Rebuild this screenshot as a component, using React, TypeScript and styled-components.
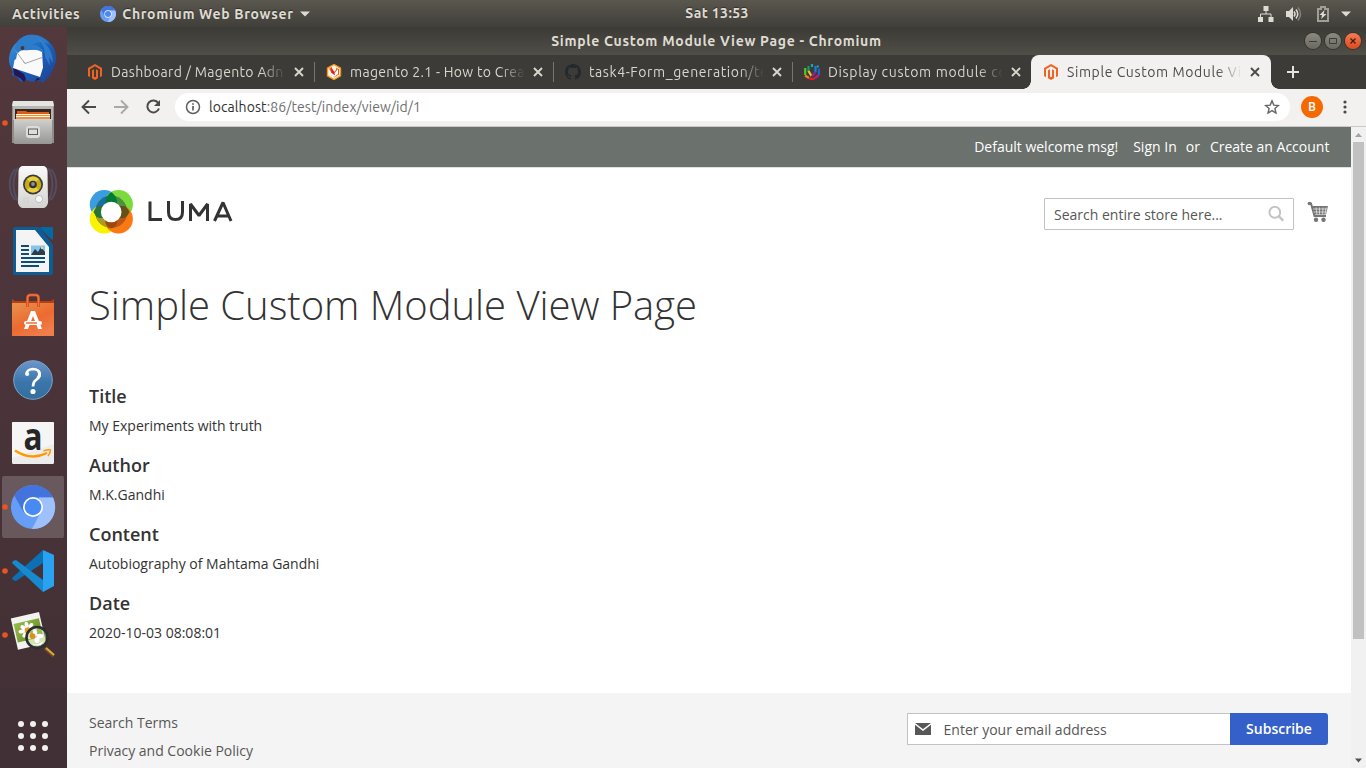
import React from "react";
import styled, { createGlobalStyle, css } from "styled-components";

const uiFont = `Ubuntu, "Noto Sans", "Open Sans", sans-serif`;
const pageFont = `"Open Sans", "Noto Sans", sans-serif`;

const GlobalStyle = createGlobalStyle`
  * { box-sizing: border-box; }
  body { margin: 0; overflow: hidden; background: #fff; }
  svg { display: block; flex: none; }
`;

const Desktop = styled.div`
  width: 1366px;
  height: 768px;
  display: flex;
  flex-direction: column;
  overflow: hidden;
  font-family: ${uiFont};
`;

const TopBar = styled.header`
  height: 27px;
  flex: none;
  display: grid;
  grid-template-columns: 1fr auto 1fr;
  align-items: center;
  padding: 0 15px 0 12px;
  background: linear-gradient(#5a574e, #403f3a);
  color: #dfdbd2;
  text-shadow: 0 -1px 1px rgba(0, 0, 0, 0.4);
`;

const TopGroup = styled.div<{ $end?: boolean }>`
  display: flex;
  align-items: center;
  justify-content: ${(p) => (p.$end ? "flex-end" : "flex-start")};
`;

const BoldLabel = styled.span<{ $spacing?: number }>`
  font-size: 14px;
  font-weight: 600;
  line-height: 20px;
  white-space: nowrap;
  letter-spacing: ${(p) => p.$spacing ?? 0.7}px;
`;

const Clock = styled(BoldLabel)`
  margin: -2px 0 0 71px;
`;

const AppMenu = styled.div`
  display: flex;
  align-items: center;
  margin-left: 20px;
  gap: 6px;
`;

const Workspace = styled.div`
  flex: 1;
  display: flex;
  min-height: 0;
`;

const Dock = styled.nav`
  width: 67px;
  flex: none;
  display: flex;
  flex-direction: column;
  justify-content: space-between;
  background: linear-gradient(#53383c, #4a343a 45%, #443136 80%, #403036);
`;

const DockItem = styled.div<{ $active?: boolean }>`
  height: 64px;
  display: flex;
  ${(p) =>
    p.$active &&
    css`
      background: rgba(255, 255, 255, 0.19);
      border-radius: 4px;
      background-clip: padding-box;
      border: solid transparent;
      border-width: 1px 3px 1px 2px;
      svg { margin: -1px 0 0 -2px; }
    `}
`;

const Browser = styled.main`
  flex: 1;
  min-width: 0;
  display: flex;
  flex-direction: column;
`;

const TitleBar = styled.div`
  height: 28px;
  flex: none;
  display: grid;
  grid-template-columns: 1fr auto 1fr;
  align-items: center;
  padding: 0 5px 0 0;
  background: linear-gradient(#3b3a35, #504e47);
  color: #dfdbd2;
`;

const WindowTitle = styled(BoldLabel)`
  grid-column: 2;
  margin-left: 5px;
`;

const WindowButtons = styled.div`
  grid-column: 3;
  justify-self: end;
  display: flex;
  gap: 4px;
`;

const WindowButton = styled.span<{ $close?: boolean }>`
  width: 16px;
  height: 16px;
  border-radius: 50%;
  background: ${(p) => (p.$close ? "linear-gradient(#f47d55, #e2481b)" : "linear-gradient(#8b8980, #6a6861)")};
  box-shadow: 0 0 0 1px #35342f;
`;

const TabStrip = styled.div`
  height: 34px;
  flex: none;
  display: flex;
  align-items: stretch;
  padding-left: 8px;
  background: #3c3b37;
`;

const Tab = styled.div<{ $active?: boolean; $divider?: boolean }>`
  position: relative;
  width: 239px;
  display: flex;
  align-items: center;
  padding: 0 7px 0 12px;
  color: #d9d6cd;
  ${(p) =>
    p.$divider &&
    css`
      background: linear-gradient(#76756f, #76756f) left center / 1px 20px no-repeat;
    `}
  ${(p) =>
    p.$active &&
    css`
      width: 240px;
      background: #f2f1f0;
      color: #4c4c4c;
      border-radius: 8px 8px 0 0;
      &::before, &::after {
        content: "";
        position: absolute;
        bottom: 0;
        width: 8px;
        height: 8px;
      }
      &::before { left: -8px; background: radial-gradient(circle at 0 0, transparent 7.5px, #f2f1f0 8px); }
      &::after { right: -8px; background: radial-gradient(circle at 100% 0, transparent 7.5px, #f2f1f0 8px); }
    `}
`;

const TabTitle = styled.span<{ $spacing?: number }>`
  flex: none;
  width: 175px;
  margin: 0 5px 0 8px;
  white-space: nowrap;
  font-size: 14px;
  line-height: 20px;
  letter-spacing: ${(p) => p.$spacing ?? 0}px;
  mask-image: linear-gradient(90deg, #000 150px, transparent 175px);
`;

const NewTab = styled.div`
  display: flex;
  align-items: center;
  margin-left: 14px;
`;

const Toolbar = styled.div`
  height: 38px;
  flex: none;
  display: flex;
  align-items: center;
  padding: 0 13px 2px 14px;
  background: #f2f1f0;
  border-bottom: 1px solid #c9cac7;
`;

const NavButtons = styled.div`
  display: flex;
  gap: 16px;
  margin-right: 14px;
`;

const Omnibox = styled.div`
  width: 1115px;
  height: 28px;
  display: flex;
  align-items: center;
  padding: 0 10px;
  border-radius: 14px;
  background: #fff;
`;

const Url = styled.span`
  flex: 1;
  margin-left: 8px;
  font-size: 14px;
  line-height: 20px;
  letter-spacing: 0.08px;
  color: #6e6e6e;
  b { font-weight: 400; color: #303030; }
`;

const Avatar = styled.span`
  width: 22px;
  height: 22px;
  margin: 0 13.5px 0 11px;
  border-radius: 50%;
  background: #f56a00;
  color: #fff;
  font: 500 12px/22px Roboto, sans-serif;
  text-align: center;
`;

const Viewport = styled.div`
  flex: 1;
  min-height: 0;
  display: flex;
`;

const Page = styled.div`
  width: 1284px;
  display: flex;
  flex-direction: column;
  overflow: hidden;
  background: #fff;
  color: #333;
  font: 400 14px/20px ${pageFont};
`;

const AccountBar = styled.div`
  height: 41px;
  flex: none;
  display: flex;
  justify-content: flex-end;
  align-items: center;
  padding: 0 21.600px 0 0;
  background: #6b716c;
  border-bottom: 1px solid #e0e0e0;
  color: #fff;
  white-space: nowrap;
`;

const AccountText = styled.span<{ $gap?: number }>`
  margin-left: ${(p) => p.$gap ?? 0}px;
`;

const StoreHeader = styled.div`
  height: 87px;
  flex: none;
  display: flex;
  padding: 0 22px;
`;

const Logo = styled.div`
  display: flex;
  flex: 1;
  margin-top: 21px;
`;

const SearchBox = styled.div`
  width: 250px;
  height: 32px;
  margin-top: 30px;
  display: flex;
  align-items: center;
  justify-content: space-between;
  padding: 0 9px;
  border: 1px solid #c2c2c2;
  border-radius: 1px;
  color: #575757;
  span { padding-top: 2px; }
`;

const CartSlot = styled.div`
  margin: 33px 0 0 13px;
`;

const PageTitle = styled.h1`
  margin: 28px 22px 0;
  font-size: 40px;
  font-weight: 300;
  line-height: 44px;
  letter-spacing: -0.02px;
  white-space: nowrap;
`;

const Details = styled.dl`
  flex: 1;
  margin: 56px 22px 0;
`;

const Term = styled.dt`
  font-size: 18px;
  font-weight: 600;
  line-height: 26px;
  height: 33px;
`;

const Description = styled.dd`
  margin: 0;
  height: 36px;
`;

const Footer = styled.footer`
  height: 75px;
  flex: none;
  display: flex;
  justify-content: space-between;
  padding: 20px 23px 0 22px;
  background: #f4f4f4;
`;

const FooterLinks = styled.div`
  display: flex;
  flex-direction: column;
  gap: 8px;
  color: #575757;
`;

const Newsletter = styled.div`
  display: flex;
  height: 32px;
`;

const EmailField = styled.div`
  width: 323px;
  display: flex;
  align-items: center;
  gap: 12.600px;
  padding-left: 7px;
  background: #fff;
  border: 1px solid #c2c2c2;
  border-right: 0;
  border-radius: 1px 0 0 1px;
  color: #575757;
  span { padding-top: 2px; }
`;

const SubscribeButton = styled.button`
  width: 98px;
  padding: 0 0 1px;
  border: 0;
  border-radius: 0 3px 3px 0;
  background: #3560c9;
  color: #fff;
  font: 600 14px/20px ${pageFont};
`;

const Scrollbar = styled.div`
  width: 15px;
  display: flex;
  flex-direction: column;
  align-items: center;
  background: #f1f1f1;
`;

const ScrollThumb = styled.div`
  width: 11px;
  height: 497px;
  margin-bottom: auto;
  background: #c1c1c1;
`;

const Dot = () => <circle cx="5" cy="32" r="2.8" fill="#e95420" />;

const DockSvg = ({ children }: { children: React.ReactNode }) => (
  <svg width="67" height="64" viewBox="0 0 67 64">{children}</svg>
);

const Thunderbird = () => (
  <DockSvg>
    <defs>
      <linearGradient id="tb" x1="0" y1="0" x2="1" y2="1">
        <stop offset="0" stopColor="#3f9be0" /><stop offset=".5" stopColor="#1c62bd" /><stop offset="1" stopColor="#1d3f8e" />
      </linearGradient>
    </defs>
    <path d="M15 17C10 23 8 30 9.500 37l3.500 8-1 3 5 2 4 5 5-2 7 2 4-2 7 3 1-3 5-4 3-7 3-7c1-10-3-19-12-24C37 7 29 7 23 10z" fill="url(#tb)" />
    <path d="M13 40l1 8 6 3 4 4 2-3-2-5zM37 51l-2 3 6-2z" fill="#241757" />
    <path d="M18 23l24-.5.500 10 .5 8-3 9.500-27-9 1.500-8 1.500-1z" fill="#fafafa" />
    <path d="M15.500 23.500l9.500 13 17-6M25 36.500l-1.500-2" fill="none" stroke="#9b9b9b" strokeWidth=".9" />
    <path d="M28 8c9-1 18 3 22 10-5-3-12-4-18 0 6 0 9 2 12 8-5-3-9-4-14-3-5 1-9-1-12 3l-3-4c0-7 5-12 13-14z" fill="#2d7cca" />
    <path d="M37 11c9 4 16 13 16 25l-4-6 1 9-5-9c0-8-2-14-8-19z" fill="#3889d4" opacity=".7" />
    <circle cx="22.500" cy="21" r="1.900" fill="#4b352e" />
  </DockSvg>
);

const Files = () => (
  <DockSvg>
    <defs><linearGradient id="fg" x2="0" y2="1"><stop stopColor="#d0d0ce" /><stop offset="1" stopColor="#969694" /></linearGradient></defs>
    <Dot />
    <path d="M13 10h40l1 4v38H12V14z" fill="#8d8d8b" />
    <path d="M13 10h40l1 5H12z" fill="#e4e4e2" />
    <path d="M13 15h40v14H13z" fill="#b6b6b4" />
    <rect x="15" y="18" width="36" height="10" fill="#35261f" />
    <path d="M17 20h9l1 1h22v7H17z" fill="#d95d19" />
    <path d="M16 23h34v5H16z" fill="#fff0dc" /><path d="M16 24h34v1H16zM16 26h34v2H16z" fill="#e99340" />
    <rect x="14" y="28" width="38" height="25" rx="1" fill="url(#fg)" />
    <rect x="27.500" y="36.500" width="11" height="9" rx="1.500" fill="#ddd" stroke="#dcdcdc" strokeWidth="3" />
    <rect x="28.500" y="38" width="9" height="5.500" fill="#ddd" stroke="#5c5c5c" />
  </DockSvg>
);

const Rhythmbox = () => (
  <DockSvg>
    <defs><linearGradient id="rg" x2="0" y2="1"><stop stopColor="#fafafa" /><stop offset="1" stopColor="#d3d3d1" /></linearGradient></defs>
    <g fill="none" stroke="#5d7099" strokeWidth="2" opacity=".4">
      <path d="M15 14c-7 9-7 22 0 31M18 13c-6 10-6 23 0 33M51 14c7 9 7 22 0 31M48 13c6 10 6 23 0 33" />
    </g>
    <path d="M22 11h22q3 1 3.500 5l.5 32q-1 4-4 5H22q-3-1-4-5l.5-32q.5-4 3.500-5z" fill="url(#rg)" />
    <circle cx="33" cy="29.500" r="10" fill="#363a3d" />
    <circle cx="33" cy="29.500" r="8.300" fill="#c9a914" />
    <path d="M33 29.500L27 24q6-5 12 0zM33 29.500L27 35q6 5 12 0z" fill="#e9cf3e" />
    <circle cx="33" cy="29.500" r="3.800" fill="#2e3436" /><circle cx="33" cy="29" r="1.900" fill="#8d9199" />
    <circle cx="39" cy="44" r="3.600" fill="#f6f6f6" stroke="#b5b5b3" strokeWidth=".8" />
    <rect x="24" y="43" width="4" height="4" fill="none" stroke="#d0d0ce" />
  </DockSvg>
);

const Writer = () => (
  <DockSvg>
    <path d="M15 8h24l14 18v28q0 2-2 2H15q-2 0-2-2V10q0-2 2-2z" fill="#0e5c94" />
    <path d="M41 8h11q1 0 1 1v11q-1 1-2 0L40 9.500z" fill="#0369a3" />
    <path d="M16 11h19l14 17v25H16z" fill="#f4f4f4" />
    <path d="M21 27h8M21 31h8M21 35h8M21 39h24M21 43h24M21 47h18" stroke="#0e4d75" strokeWidth="1.800" />
    <rect x="31" y="26.500" width="14" height="9.500" fill="#84c4ee" />
    <path d="M31 36l4-6 3 3 3-5 4 5v3z" fill="#2b3f4a" /><circle cx="42" cy="29" r="1.200" fill="#ffd36b" />
  </DockSvg>
);

const Software = () => (
  <DockSvg>
    <defs><linearGradient id="sg" x2=".6" y2="1"><stop stopColor="#e8934d" /><stop offset=".6" stopColor="#ec6a30" /><stop offset="1" stopColor="#f07d4a" /></linearGradient></defs>
    <path d="M12 16l3 2h36l3-2v6H12z" fill="#b93d13" />
    <path d="M12 20h42v33H12z" fill="url(#sg)" />
    <path d="M27.500 24v-9q0-3 3-3h5q3 0 3 3v9" fill="none" stroke="#c84b1b" strokeWidth="3" />
    <path d="M27.500 24v-9q0-3 3-3h5q3 0 3 3v9" fill="none" stroke="#f07343" strokeWidth="1.500" />
    <path d="M31 28h4l7 18h-4l-5-13-5 13h-4z" fill="#fff" />
    <rect x="24" y="38" width="18" height="4" rx="2" fill="#fff" /><path d="M26 40h11" stroke="#ed7038" strokeWidth="1.500" />
  </DockSvg>
);

const Help = () => (
  <DockSvg>
    <defs><linearGradient id="hg" x2="0" y2="1"><stop stopColor="#6b96cb" /><stop offset=".55" stopColor="#3b76ab" /><stop offset="1" stopColor="#316f9c" /></linearGradient></defs>
    <circle cx="33" cy="33" r="19.300" fill="url(#hg)" stroke="#7fa2c8" strokeWidth="1" />
    <path d="M26.700 27.500q-.5-5 6-5.500 6.800 0 7 5.300 0 3.200-3.700 5.700-3 2-3 6.500" fill="none" stroke="#fff" strokeWidth="2.600" />
    <path d="M38.500 24q2.500 4-1 7.500" fill="none" stroke="#fff" strokeWidth="3" />
    <circle cx="27.200" cy="27" r="2" fill="#fff" /><circle cx="33" cy="44.500" r="2.600" fill="#fff" />
  </DockSvg>
);

const Amazon = () => (
  <DockSvg>
    <rect x="12" y="11" width="42" height="42" rx="1.500" fill="#ececec" />
    <path d="M12 12q0-1 1-1h40q1 0 1 1v21L12 47z" fill="#f5f5f5" />
    <text x="33" y="39" textAnchor="middle" fontFamily="Open Sans" fontWeight="700" fontSize="38" textLength="19" lengthAdjust="spacingAndGlyphs" fill="#262626">a</text>
    <path d="M15 39.500q16 10.500 32 2.500" fill="none" stroke="#ff9900" strokeWidth="2.500" />
    <path d="M43.500 40q5-2 7-1 0 3-2.500 6" fill="none" stroke="#ff9900" strokeWidth="1.600" />
  </DockSvg>
);

const ChromiumArt = () => (
  <>
    <circle cx="33" cy="32" r="22" fill="#669df6" />
    <path d="M14.300 20.500A22 22 0 0 1 53 22.500L33 22.500 23.500 37z" fill="#4373dc" />
    <path d="M53 22.500A22 22 0 0 1 32 54l9-17.500-2-14z" fill="#9fc1fb" />
    <circle cx="33" cy="32" r="10" fill="#fff" /><circle cx="33" cy="32" r="8.300" fill="#4889f4" />
  </>
);

const VSCode = () => (
  <DockSvg>
    <Dot />
    <path d="M43 11L12 39l1 2 3 1 27-18z" fill="#0d70b4" />
    <path d="M43 53L12 24l1-2 3-1 27 20z" fill="#1689cf" />
    <path d="M43 11l11 5v31l-11 6z" fill="#28a2f1" />
  </DockSvg>
);

const ImageViewer = () => (
  <DockSvg>
    <defs><linearGradient id="ig" y2="1"><stop stopColor="#96bb4a" /><stop offset="1" stopColor="#668824" /></linearGradient></defs>
    <Dot />
    <g transform="rotate(-13 28 28)">
      <rect x="14" y="12" width="29" height="32" fill="#f3f3ef" />
      <rect x="15.500" y="18" width="26" height="19" fill="url(#ig)" />
      <g fill="#fff">
        <ellipse cx="28" cy="22" rx="2" ry="3.500" /><ellipse cx="28" cy="33" rx="2" ry="3.500" />
        <ellipse cx="22" cy="27" rx="3.500" ry="2" /><ellipse cx="34" cy="27" rx="3.500" ry="2" />
        <ellipse cx="24" cy="23.500" rx="2" ry="3" transform="rotate(-45 24 23.500)" /><ellipse cx="24" cy="31" rx="2" ry="3" transform="rotate(45 24 31)" />
        <ellipse cx="32" cy="23.500" rx="2" ry="3" transform="rotate(45 32 23.500)" />
      </g>
      <circle cx="28" cy="27.500" r="3.200" fill="#e99a1f" />
    </g>
    <path d="M45 45l9 8" stroke="#6a4b1e" strokeWidth="4" /><path d="M46 45l8 7" stroke="#e3a544" strokeWidth="2" />
    <circle cx="37" cy="34.500" r="10.500" fill="#bdd284" fillOpacity=".55" stroke="#2b2f2f" strokeWidth="2.600" />
    <g fill="#fff"><ellipse cx="35" cy="30" rx="2.200" ry="3.500" /><ellipse cx="40" cy="33" rx="3.500" ry="2.200" /><ellipse cx="37" cy="37" rx="2.500" ry="3" /><path d="M31 40q6 4 12-2l-2 4q-6 2-10-2z" /></g>
    <circle cx="32.500" cy="33" r="2.800" fill="#dd8e1a" />
  </DockSvg>
);

const AppsGrid = () => (
  <DockSvg>
    {[20, 32, 44].map((y) => [21, 33, 45].map((x) => <circle key={`${x}-${y}`} cx={x} cy={y} r="3" fill="#f2f1f0" />))}
  </DockSvg>
);

const MagentoIcon = () => (
  <svg width="16" height="16" viewBox="0 0 16 16">
    <path d="M8 0l7 4v8l-2 1.200V5.200L8 2.300 3 5.200v8L1 12V4z" fill="#f26322" />
    <path d="M5 6.300l2-1.100v7.500l1 .6 1-.6V5.200l2 1.100v8L8 16l-3-1.700z" fill="#f26322" />
  </svg>
);

const MageStackIcon = () => (
  <svg width="16" height="16" viewBox="0 0 16 16">
    <path d="M8 .5l6.500 3.700v7.600L8 15.500l-6.500-3.700V4.200z" fill="#fff3df" stroke="#f29a1d" strokeWidth="1.400" />
    <path d="M3 4.500l3-1.500v3l2 2 2-2V4l3 1v5.500L8 13.500z" fill="#ef5a28" />
    <path d="M5 6l3 4 4-5v5l-4 3-3-3z" fill="#fff" /><path d="M5.500 3.500l2.500 4 1 4-4-3z" fill="#d81f26" />
  </svg>
);

const GithubIcon = () => (
  <svg width="16" height="16" viewBox="0 0 16 16">
    <path fill="#24292e" d="M8 0C3.580 0 0 3.580 0 8c0 3.540 2.290 6.530 5.470 7.590.4.070.55-.17.55-.38 0-.19-.01-.82-.01-1.490-2.010.37-2.530-.49-2.690-.94-.09-.23-.48-.94-.82-1.130-.28-.15-.68-.52-.01-.53.63-.01 1.080.58 1.230.82.72 1.210 1.870.87 2.330.66.07-.52.28-.87.51-1.070-1.780-.2-3.640-.89-3.640-3.950 0-.87.31-1.590.82-2.150-.08-.2-.36-1.020.08-2.120 0 0 .67-.21 2.200.82A7.700 7.700 0 0 1 8 3.860c.68 0 1.360.09 2 .27 1.530-1.040 2.200-.82 2.200-.82.44 1.100.16 1.920.08 2.120.51.56.82 1.270.82 2.150 0 3.070-1.870 3.750-3.650 3.950.29.25.54.73.54 1.480 0 1.070-.01 1.930-.01 2.200 0 .21.15.46.55.38A8 8 0 0 0 16 8c0-4.420-3.580-8-8-8z" />
  </svg>
);

const RainbowIcon = () => (
  <svg width="16" height="16" viewBox="0 0 16 16" fill="none" strokeWidth="2.200">
    <path d="M1.200 4v7" stroke="#54c52b" /><path d="M1 11.500l4 2.500" stroke="#f47b20" />
    <path d="M4.500 2v6" stroke="#10a05c" /><path d="M4.500 7l3 5" stroke="#f7c51e" />
    <path d="M5 14l3 1.500 3-1.500" stroke="#e21b2c" /><path d="M11 14l4-3" stroke="#c3177d" />
    <path d="M15 4.500V11" stroke="#265fd0" /><path d="M11.500 2v6" stroke="#187ce3" />
    <path d="M8 0v3M13 2l1.500 1" stroke="#18a5b5" /><path d="M11.500 8L8 12" stroke="#8c278d" />
  </svg>
);

const CloseIcon = () => (
  <svg width="16" height="16" viewBox="0 0 16 16" stroke="currentColor" strokeWidth="1.900"><path d="M4 4l8 8M12 4l-8 8" /></svg>
);

const Caret = () => (
  <svg width="10" height="6" viewBox="0 0 10 6"><path d="M0 .5h10L5 5.500z" fill="#dfdbd2" /></svg>
);

const VolumeIcon = styled.svg`
  margin-left: 12px;
`;

const BatteryIcon = styled.svg`
  margin: 0 12px 0 15px;
`;

const StatusIcons = () => (
  <>
    <svg width="16" height="16" viewBox="0 0 16 16"><path d="M5.500 0h5v5h-5zM0 11h5v5H0zM10.500 11h5v5h-5z" fill="#dfdbd2" /><path d="M8 5v3M2.500 11V8h10.500v3" stroke="#dfdbd2" fill="none" /></svg>
    <VolumeIcon width="16" height="16" viewBox="0 0 16 16"><path d="M0 5h3l4-4v14l-4-4H0z" fill="#dfdbd2" /><path d="M8 5.500q2 2.500 0 5" fill="none" stroke="#dfdbd2" strokeWidth="1.500" /><path d="M10 3.500q3.500 4.500 0 9" fill="none" stroke="#dfdbd2" strokeWidth="1.500" /><path d="M12 1.500q5 6.500 0 13" fill="none" stroke="#85827b" strokeWidth="1.500" /></VolumeIcon>
    <BatteryIcon width="12" height="16" viewBox="0 0 12 16"><path d="M1 3h3V1h4v2h3v12H1z" fill="none" stroke="#a19e96" strokeWidth="2" /><path d="M7.500 4L2.500 9H5l-.8 4L9.500 8H6.700z" fill="#dfdbd2" /></BatteryIcon>
  </>
);

const LumaLogo = () => (
  <svg width="146" height="46" viewBox="0 0 146 46">
    <g>
      <circle cx="15.200" cy="15.500" r="14.400" fill="#3a9de0" /><circle cx="29.500" cy="15.500" r="14.400" fill="#7bdb3c" />
      <circle cx="15.200" cy="30" r="14.400" fill="#f9f200" /><circle cx="29.500" cy="30" r="14.400" fill="#fa7912" />
      <circle cx="22.200" cy="22.700" r="16" fill="#5b6b30" />
      <path d="M7.500 17A16 16 0 0 1 19 7l-2 9-9 3z" fill="#1a6e9f" />
      <path d="M25.500 7a16 16 0 0 1 11.500 10l-9 1z" fill="#4a9240" />
      <path d="M7 28l10-1 2 11.500a16 16 0 0 1-12-10.500z" fill="#a99c25" />
      <path d="M37.500 28l-9-1-3 11.500a16 16 0 0 0 12-10.500z" fill="#ba5818" />
      <path d="M16.500 14q0-7 5.700-11 5.800 4 5.800 11v8H16.500z" fill="#007b36" />
      <path d="M10 17q-4 2-5.500 6 1.500 4 5.500 6h7V17z" fill="#267536" />
      <path d="M35 17q4 2 5.500 6-1.500 4-5.500 6h-7V17z" fill="#65501a" />
      <path d="M16.500 34q1 4 5.700 5.500 4.500-1.500 5.800-5.500v-7H16.500z" fill="#9f470d" />
      <circle cx="22.200" cy="23" r="10.300" fill="#fff" />
    </g>
    <g fill="none" stroke="#333" strokeWidth="3">
      <path d="M61 12.500v18H73" />
      <path d="M79.500 12v11q0 7.500 7 7.500t7-7.500V12" />
      <path d="M101.500 32V15l8.500 11.500 8.500-11.500V32" strokeLinejoin="bevel" />
      <path d="M125.500 32l8.500-18.500L142 32M128.500 27h11" strokeLinejoin="bevel" />
    </g>
  </svg>
);

const Magnifier = () => (
  <svg width="16" height="16" viewBox="0 0 16 16" fill="none" stroke="#c2c2c2"><circle cx="6.800" cy="6.300" r="5.400" strokeWidth="1.900" /><path d="M10.500 10l4.700 4.700" strokeWidth="2.400" /></svg>
);

const Cart = () => (
  <svg width="22" height="22" viewBox="0 0 22 22">
    <path d="M1.500 2.500H4L7.500 15H19" fill="none" stroke="#757575" strokeWidth="2" />
    <circle cx="2.400" cy="2.500" r="1.800" fill="#757575" />
    <path d="M4.500 5H21l-2 8.500H7z" fill="#757575" />
    <path d="M6 8h14M6.500 11h13M9 6.500l1 7M12.500 6.500v7M16 6.500l-.5 7M19 6.500l-1 7" stroke="#fff" strokeWidth=".6" />
    <circle cx="9" cy="18.700" r="2.200" fill="#757575" /><circle cx="16.500" cy="18.700" r="2.200" fill="#757575" />
  </svg>
);

const tabs = [
  { title: "Dashboard / Magento Adn", icon: <MagentoIcon />, spacing: 0.33 },
  { title: "magento 2.1 - How to Crea", icon: <MageStackIcon />, spacing: 0.3 },
  { title: "task4-Form_generation/te", icon: <GithubIcon />, spacing: 0.6 },
  { title: "Display custom module co", icon: <RainbowIcon />, spacing: 0.65 },
  { title: "Simple Custom Module Vi", icon: <MagentoIcon />, spacing: 0.6 },
];

const fields = [
  ["Title", "My Experiments with truth"],
  ["Author", "M.K.Gandhi"],
  ["Content", "Autobiography of Mahtama Gandhi"],
  ["Date", "2020-10-03 08:08:01"],
];

export default function App() {
  return (
    <Desktop>
      <GlobalStyle />
      <TopBar>
        <TopGroup>
          <BoldLabel $spacing={0.6}>Activities</BoldLabel>
          <AppMenu>
            <svg width="16" height="16" viewBox="11 10 44 44"><ChromiumArt /></svg>
            <BoldLabel $spacing={0.67}>Chromium Web Browser</BoldLabel>
            <Caret />
          </AppMenu>
        </TopGroup>
        <Clock $spacing={0.4}>Sat 13:53</Clock>
        <TopGroup $end><StatusIcons /><Caret /></TopGroup>
      </TopBar>
      <Workspace>
        <Dock>
          <div>
            <DockItem><Thunderbird /></DockItem>
            <DockItem><Files /></DockItem>
            <DockItem><Rhythmbox /></DockItem>
            <DockItem><Writer /></DockItem>
            <DockItem><Software /></DockItem>
            <DockItem><Help /></DockItem>
            <DockItem><Amazon /></DockItem>
            <DockItem $active><DockSvg><Dot /><ChromiumArt /></DockSvg></DockItem>
            <DockItem><VSCode /></DockItem>
            <DockItem><ImageViewer /></DockItem>
          </div>
          <DockItem><AppsGrid /></DockItem>
        </Dock>
        <Browser>
          <TitleBar>
            <WindowTitle>Simple Custom Module View Page - Chromium</WindowTitle>
            <WindowButtons>
              <WindowButton><svg width="16" height="16" stroke="#3c3b37"><path d="M4 8.500h8" /></svg></WindowButton>
              <WindowButton><svg width="16" height="16" fill="none" stroke="#3c3b37"><path d="M4.500 5.500h7v5h-7z" /></svg></WindowButton>
              <WindowButton $close><svg width="16" height="16" stroke="#3c2018" strokeWidth="1.300"><path d="M5.500 5.500l5 5M10.500 5.500l-5 5" /></svg></WindowButton>
            </WindowButtons>
          </TitleBar>
          <TabStrip>
            {tabs.map((t, i) => (
              <Tab key={t.title} $active={i === 4} $divider={i > 0 && i < 4}>
                {t.icon}
                <TabTitle $spacing={t.spacing}>{t.title}</TabTitle>
                <CloseIcon />
              </Tab>
            ))}
            <NewTab><svg width="16" height="16" stroke="#e6e3dc" strokeWidth="2"><path d="M8 2v12M2 8h12" /></svg></NewTab>
          </TabStrip>
          <Toolbar>
            <NavButtons>
              <svg width="16" height="16" fill="none" stroke="#4a4a4a" strokeWidth="1.900"><path d="M15 8H2M8 1.500L1.500 8 8 14.500" /></svg>
              <svg width="16" height="16" fill="none" stroke="#a9a8a7" strokeWidth="1.900"><path d="M1 8h13M8 1.500L14.500 8 8 14.500" /></svg>
              <svg width="16" height="16" fill="none" stroke="#4a4a4a" strokeWidth="2"><path d="M13.300 4A6 6 0 1 0 14 9.500" /><path d="M15 1v6H9z" fill="#4a4a4a" stroke="none" /></svg>
            </NavButtons>
            <Omnibox>
              <svg width="16" height="16" fill="none" stroke="#5f5f5f" strokeWidth="1.500"><circle cx="8" cy="8" r="6.500" /><path d="M8 7v4.500M8 4.200v1.600" strokeWidth="1.700" /></svg>
              <Url><b>localhost</b>:86/test/index/view/id/1</Url>
              <svg width="16" height="16" fill="none" stroke="#666" strokeWidth="1.400"><path d="M8 1.900l1.800 4.200 4.600.4-3.500 3 1.100 4.500L8 11.600 4 14l1.100-4.500-3.500-3 4.600-.4z" /></svg>
            </Omnibox>
            <Avatar>B</Avatar>
            <svg width="16" height="16" fill="#484848"><circle cx="8" cy="3" r="1.600" /><circle cx="8" cy="8" r="1.600" /><circle cx="8" cy="13" r="1.600" /></svg>
          </Toolbar>
          <Viewport>
            <Page>
              <AccountBar>
                <AccountText>Default welcome msg!</AccountText>
                <AccountText $gap={15}>Sign In</AccountText>
                <AccountText $gap={9}>or</AccountText>
                <AccountText $gap={10}>Create an Account</AccountText>
              </AccountBar>
              <StoreHeader>
                <Logo><LumaLogo /></Logo>
                <SearchBox><span>Search entire store here...</span><Magnifier /></SearchBox>
                <CartSlot><Cart /></CartSlot>
              </StoreHeader>
              <PageTitle>Simple Custom Module View Page</PageTitle>
              <Details>
                {fields.map(([term, value]) => (
                  <div key={term}><Term>{term}</Term><Description>{value}</Description></div>
                ))}
              </Details>
              <Footer>
                <FooterLinks><span>Search Terms</span><span>Privacy and Cookie Policy</span></FooterLinks>
                <Newsletter>
                  <EmailField>
                    <svg width="16" height="12" viewBox="0 0 16 12"><path d="M0 0h16v12H0z" fill="#575757" /><path d="M-.5.500L8 7 16.500.500" fill="none" stroke="#fff" strokeWidth="1.500" /></svg>
                    <span>Enter your email address</span>
                  </EmailField>
                  <SubscribeButton>Subscribe</SubscribeButton>
                </Newsletter>
              </Footer>
            </Page>
            <Scrollbar>
              <svg width="15" height="15"><path d="M4 10h7L7.500 6z" fill="#a3a3a3" /></svg>
              <ScrollThumb />
              <svg width="15" height="15"><path d="M4 5.500h7l-3.500 4z" fill="#505050" /></svg>
            </Scrollbar>
          </Viewport>
        </Browser>
      </Workspace>
    </Desktop>
  );
}
